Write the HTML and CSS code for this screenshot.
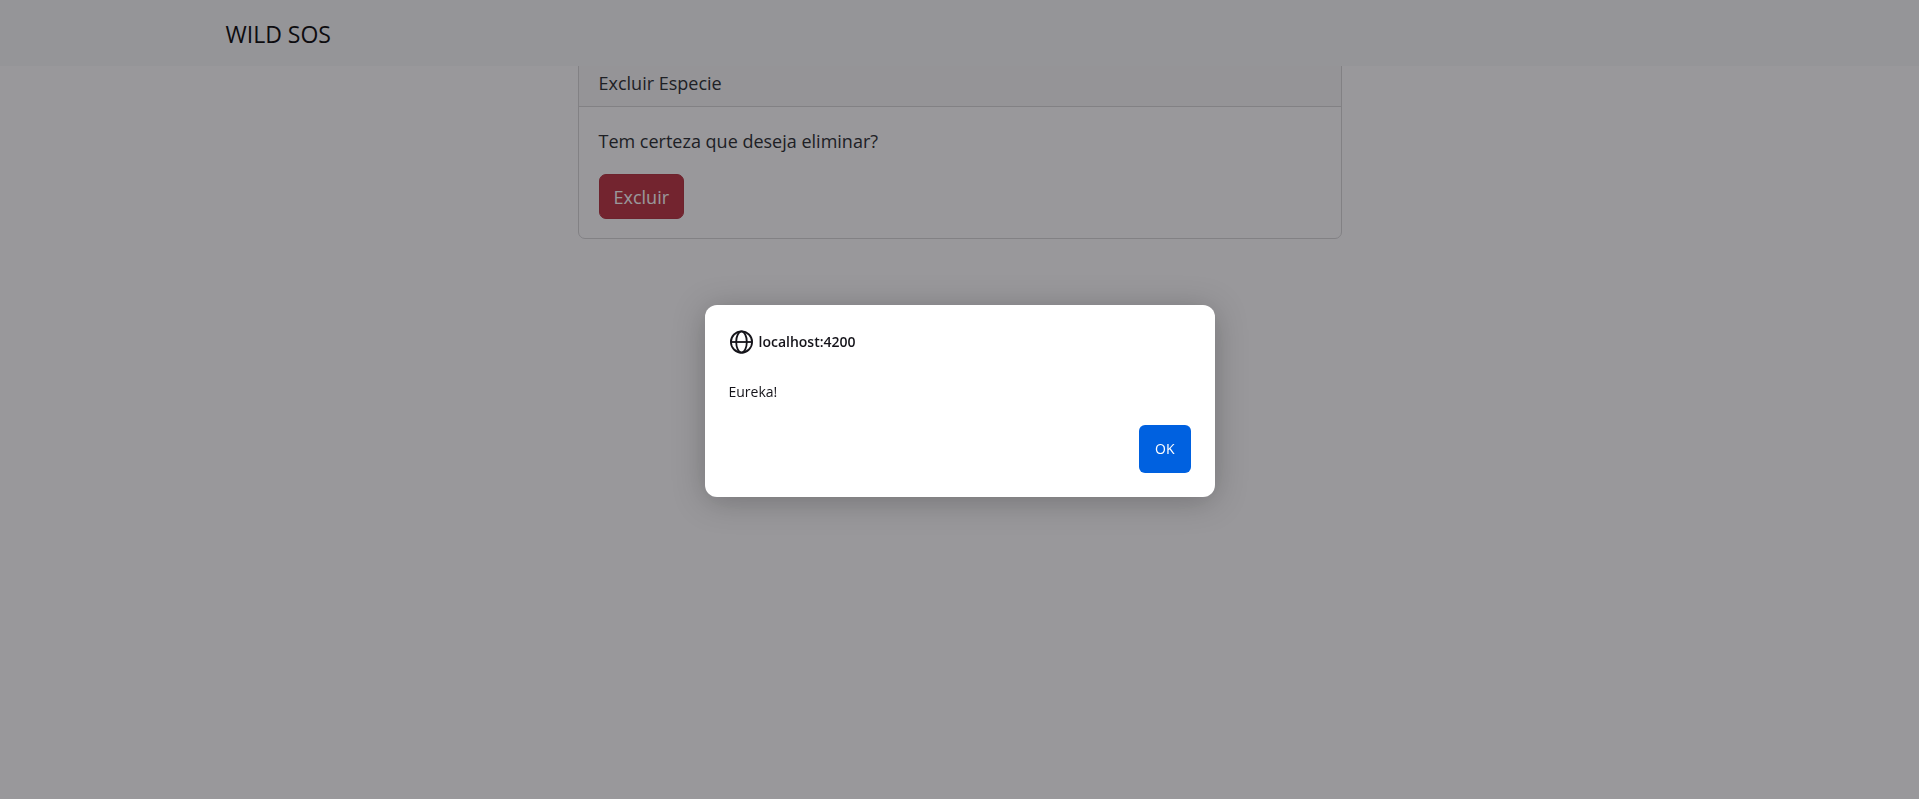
FILE: index.html
```html
<!DOCTYPE html>
<html lang="pt">
<head>
<meta charset="utf-8">
<meta name="viewport" content="width=device-width, initial-scale=1">
<title>Wild SOS</title>
<link rel="stylesheet" href="styles.css">
</head>
<body>
<header class="navbar">
  <div class="container">
    <a class="brand" href="#">WILD SOS</a>
  </div>
</header>
<main class="page">
  <section class="card">
    <div class="card-header">Excluir Especie</div>
    <div class="card-body">
      <p class="card-text">Tem certeza que deseja eliminar?</p>
      <button class="btn-danger" type="button">Excluir</button>
    </div>
  </section>
</main>
<div class="backdrop">
  <div class="prompt" role="alertdialog" aria-modal="true" aria-labelledby="prompt-title" aria-describedby="prompt-text">
    <div class="prompt-title">
      <svg class="globe" viewBox="0 0 24 24" fill="none" stroke="currentColor" stroke-width="1.8" aria-hidden="true">
        <circle cx="12" cy="12" r="10.6"/>
        <ellipse cx="12" cy="12" rx="5.3" ry="10.6"/>
        <path d="M1.5 12h21"/>
      </svg>
      <span id="prompt-title">localhost:4200</span>
    </div>
    <p class="prompt-text" id="prompt-text">Eureka!</p>
    <div class="prompt-actions">
      <button class="btn-ok" type="button">OK</button>
    </div>
  </div>
</div>
</body>
</html>
```
FILE: styles.css
```css
* {
  box-sizing: border-box;
}

body {
  margin: 0;
  background: #fff;
  color: #212529;
  font-family: "Segoe UI", "Open Sans", "Noto Sans", sans-serif;
  font-size: 18px;
  line-height: 27px;
}

p {
  margin: 0;
}

button {
  font: inherit;
}

.navbar {
  position: fixed;
  inset: 0 0 auto;
  z-index: 1;
  padding: 16px 0 14px;
  background: #f8f9fa;
}

.container {
  max-width: 1468px;
  margin: 0 auto;
}

.brand {
  display: block;
  color: #000;
  font-size: 23px;
  line-height: 36px;
  text-decoration: none;
}

.page {
  padding-top: 59px;
}

.card {
  max-width: 764px;
  margin: 0 auto;
  border: 1px solid #d5d5d6;
  border-radius: 7px;
}

.card-header {
  padding: 10px 20px 9px;
  border-bottom: 1px solid #d5d5d6;
  border-radius: 6px 6px 0 0;
  background: #f8f8f8;
}

.card-body {
  padding: 21px 20px 19px;
}

.card-text {
  margin-bottom: 19px;
}

.btn-danger {
  display: block;
  padding: 9px 14px 7px;
  border: 1px solid #b02a37;
  border-radius: 7px;
  background: #bb2d3b;
  color: #fff;
}

.backdrop {
  position: fixed;
  inset: 0;
  z-index: 2;
  display: flex;
  align-items: center;
  justify-content: center;
  padding-top: 3px;
  background: rgba(28, 27, 34, 0.45);
}

.prompt {
  width: 510px;
  padding: 25px 24px 24px;
  border-radius: 12px;
  background: #fff;
  color: #15141a;
  font-size: 14px;
  line-height: 24px;
  box-shadow: 0 4px 32px rgba(0, 0, 0, 0.25);
}

.prompt-title {
  display: flex;
  align-items: center;
  gap: 5px;
  margin-bottom: 26px;
  font-weight: 600;
}

.globe {
  width: 25px;
  height: 24px;
}

.prompt-text {
  margin-bottom: 21px;
}

.prompt-actions {
  display: flex;
  justify-content: flex-end;
}

.btn-ok {
  padding: 12px 16px;
  border: 0;
  border-radius: 6px;
  background: #0061e0;
  color: #fff;
}
```
